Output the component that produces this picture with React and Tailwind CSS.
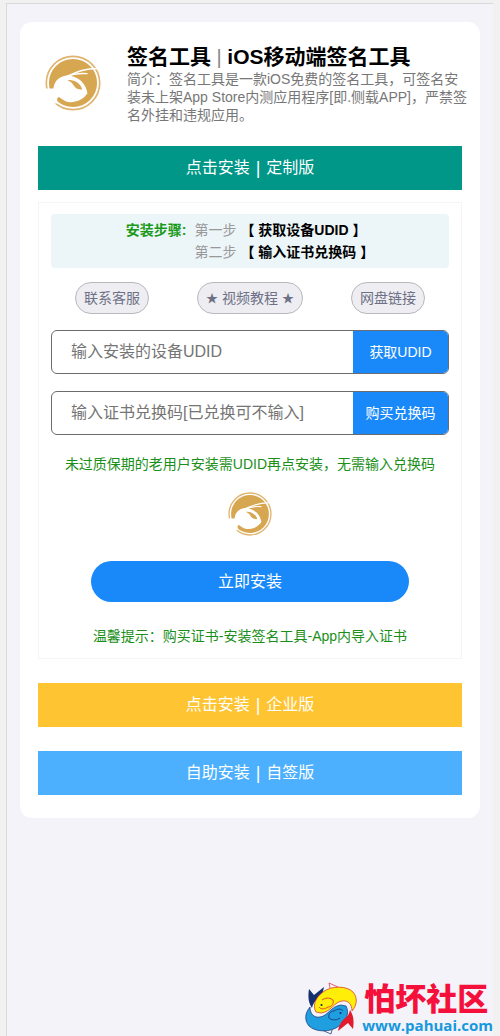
import React from "react";

function Logo({ className }) {
  return (
    <svg viewBox="0 0 60 60" className={className} aria-hidden="true">
      <circle cx="30" cy="30" r="28.6" fill="none" stroke="#e0b46e" strokeWidth="1.8" />
      <circle cx="30" cy="30" r="25.8" fill="#d7a650" />
      <path
        d="M0 36 L9 36 C10 29 13 25 19 23 C26 20 34 24 39 28 C43 32 45 37 45.500 41 C41 48 33 51 26 50.500 C21 50 18 47 15 45 C12 46 13 49 14 52 L8 52 L1 44 Z"
        fill="#fff"
      />
      <path d="M24 27 C31 26 38 30 40 37 C35 37 32.500 35.500 31 33 C30 31 28 28.500 24 27 Z" fill="#d7a650" />
      <path d="M20 24 C30 22 34 14.500 57 14.500" fill="none" stroke="#fff" strokeWidth="1.7" strokeLinecap="round" />
      <path d="M24 23 C30 20 36 19.500 45 20" fill="none" stroke="#fff" strokeWidth="1.5" strokeLinecap="round" />
    </svg>
  );
}

function FishMark() {
  return (
    <svg viewBox="3 3 54 54" className="h-[54px] w-[54px] shrink-0" aria-hidden="true">
      <path
        d="M45 27 C49 34 45 42 38 47 C29 54 14 53 8 47 C3 41 4 34 9 28 C9 35 13 39 19 38 C27 37 30 27 40 26 Z"
        fill="#1f9fe0"
        stroke="#14306f"
        strokeWidth="0.7"
      />
      <path d="M8 10 L13 16 L23 8 C22 14 20 17 17 20 C13 23 12 25 11 29 C7 23 7 17 8 10 Z" fill="#14306f" />
      <path
        d="M15 33 C11 26 15 18 22 13 C31 6 46 7 52 13 C57 19 56 26 51 32 C51 25 47 21 41 22 C33 23 30 33 20 34 Z"
        fill="#ffee08"
        stroke="#d9262f"
        strokeWidth="0.7"
      />
      <path d="M52 50 L47 44 L37 52 C38 46 40 43 43 40 C47 37 48 35 49 31 C53 37 53 43 52 50 Z" fill="#e3192d" />
      <path d="M29 9 L28 4 L37 8" fill="none" stroke="#d9262f" strokeWidth="0.7" />
      <path d="M31 51 L30 55 L23 52" fill="none" stroke="#14306f" strokeWidth="0.7" />
      <path d="M18 28 C20 31 24 30 27 28 C31 28 33 24 32 21 C28 18 24 19 21 21" fill="none" stroke="#d9262f" strokeWidth="0.8" />
      <path d="M42 32 C40 29 36 30 33 32 C29 32 27 36 28 39 C32 42 36 41 39 39" fill="none" stroke="#14306f" strokeWidth="0.8" />
      <circle cx="20.500" cy="26" r="1.100" fill="#14306f" />
      <circle cx="39.500" cy="34" r="1.100" fill="#14306f" />
    </svg>
  );
}

function Banner({ color, action, edition }) {
  return (
    <button
      type="button"
      className={`flex h-11 w-full items-center justify-center gap-1.5 text-[16px] leading-5 text-white ${color}`}
    >
      <span>{action}</span>
      <span className="text-[18px]">|</span>
      <span>{edition}</span>
    </button>
  );
}

function Pill({ children }) {
  return (
    <button
      type="button"
      className="h-8 rounded-full border border-[#b9b9bd] bg-[#ededf2] px-2 text-[14px] leading-5 text-[#6d7086]"
    >
      {children}
    </button>
  );
}

function Field({ id, label, action }) {
  return (
    <div className="flex h-11 overflow-hidden rounded-[6px] border border-[#6c6c70] bg-white">
      <input
        id={id}
        type="text"
        aria-label={label}
        placeholder={label}
        className="min-w-0 flex-1 pl-[19px] text-[16px] text-[#333] outline-none placeholder:text-[#757575]"
      />
      <button type="button" className="w-[95px] shrink-0 bg-[#1989fa] text-[14px] text-white">
        {action}
      </button>
    </div>
  );
}

export default function App() {
  return (
    <div className="flex min-h-screen bg-[#f1f1f1] pt-[3px] pr-[7px] pl-[6px] font-['Liberation_Sans','Noto_Sans_CJK_SC',sans-serif] text-[14px]">
      <div className="relative flex-1 border-t border-l border-[#d9d9dc] bg-[#f3f3f9] px-[13px] pt-[18px]">
        <main className="rounded-[12px] bg-white px-[18px] pb-[23px]">
          <header className="-mr-2 flex h-[124px] pt-[22px] pl-[7px]">
            <Logo className="mt-[11px] mr-[26px] h-14 w-14 shrink-0" />
            <div className="min-w-0">
              <h1 className="text-[21px] leading-[26px] font-bold text-black">
                签名工具<span className="text-[20px] font-normal text-[#888]"> | </span>iOS移动端签名工具
              </h1>
              <p className="leading-[18px] text-[#777]">
                简介：签名工具是一款iOS免费的签名工具，可签名安装未上架App Store内测应用程序[即.侧载APP]，严禁签名外挂和违规应用。
              </p>
            </div>
          </header>

          <Banner color="bg-[#009688]" action="点击安装" edition="定制版" />

          <section className="mt-3 mb-6 border border-[#f5f5f5] px-3 pt-[11px] pb-3">
            <div className="flex h-[54px] justify-center gap-2 rounded-[4px] bg-[#ecf5f8] pt-[5px] leading-[22px]">
              <strong className="text-[#1a9a1a]">安装步骤:</strong>
              <ol className="text-[#999]">
                <li>第一步 <strong className="text-black">【 获取设备UDID 】</strong></li>
                <li>第二步 <strong className="text-black">【 输入证书兑换码 】</strong></li>
              </ol>
            </div>

            <nav className="mt-[14px] mb-4 flex justify-around">
              <Pill>联系客服</Pill>
              <Pill>
                <span className="text-[12px]">★</span> 视频教程 <span className="text-[12px]">★</span>
              </Pill>
              <Pill>网盘链接</Pill>
            </nav>

            <form className="flex flex-col gap-[17px]" onSubmit={(e) => e.preventDefault()}>
              <Field id="udid" label="输入安装的设备UDID" action="获取UDID" />
              <Field id="code" label="输入证书兑换码[已兑换可不输入]" action="购买兑换码" />
              <p className="mt-[2px] text-center leading-5 text-[#1a8f1a]">
                未过质保期的老用户安装需UDID再点安装，无需输入兑换码
              </p>
              <Logo className="mt-px h-11 w-11 self-center" />
              <button
                type="submit"
                className="mt-2 h-[41px] w-4/5 self-center rounded-full bg-[#1989fa] text-[16px] text-white"
              >
                立即安装
              </button>
              <p className="mt-[7px] text-center leading-5 text-[#1a8f1a]">
                温馨提示：购买证书-安装签名工具-App内导入证书
              </p>
            </form>
          </section>

          <div className="flex flex-col gap-6">
            <Banner color="bg-[#ffc431]" action="点击安装" edition="企业版" />
            <Banner color="bg-[#4cb0ff]" action="自助安装" edition="自签版" />
          </div>
        </main>

        <a href="#home" className="absolute right-0 bottom-0 flex items-end gap-1">
          <FishMark />
          <span className="flex flex-col pb-[2px]">
            <span className="pl-[2px] font-['Noto_Sans_CJK_SC',sans-serif] text-[31px] leading-[38px] font-black text-[#f5103c]">
              怕坏社区
            </span>
            <span className="font-['Open_Sans',sans-serif] text-[15px] leading-[18px] font-bold text-[#1798dd]">
              www.pahuai.com
            </span>
          </span>
        </a>
      </div>
    </div>
  );
}
